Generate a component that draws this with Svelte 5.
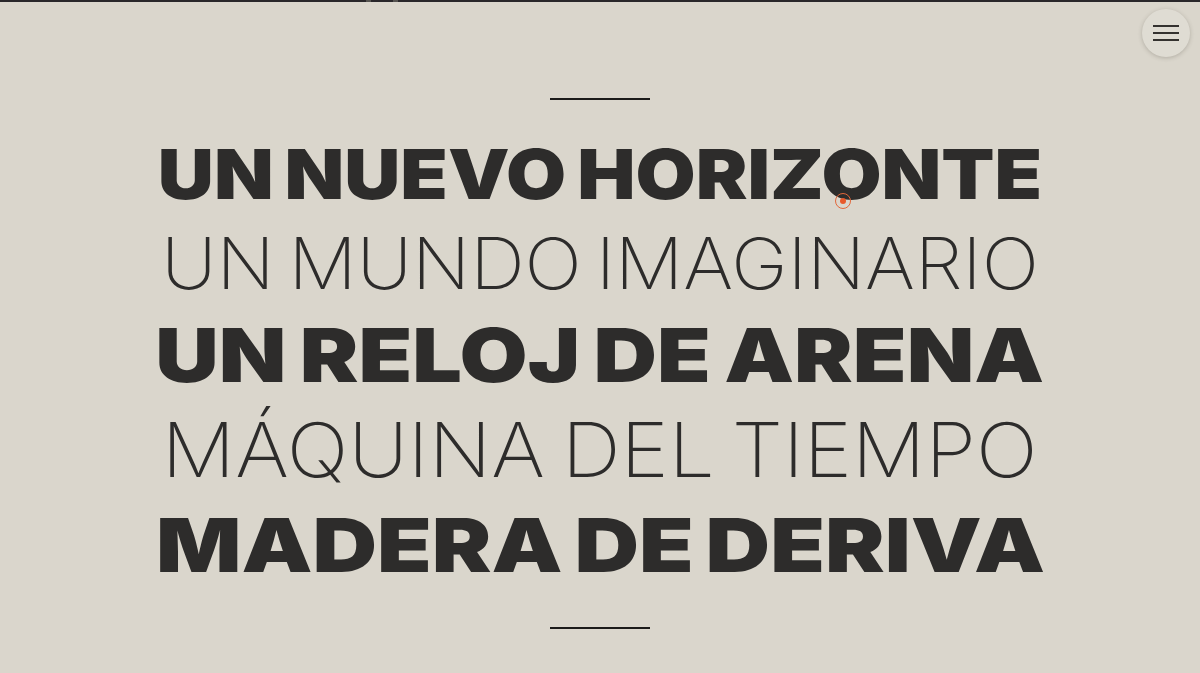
<script>
  // size and stretch per line, every line is fitted to the same width
  const lines = [
    { text: 'UN NUEVO HORIZONTE', bold: true, size: 69, sx: 1.125, ws: -4, h: 88 },
    { text: 'UN MUNDO IMAGINARIO', bold: false, size: 71, sx: 1.07, ws: -7, h: 90 },
    { text: 'UN RELOJ DE ARENA', bold: true, size: 74.5, sx: 1.18, ws: -3.5, h: 93.5 },
    { text: 'MÁQUINA DEL TIEMPO', bold: false, size: 75, sx: 1.09, ws: -5.5, h: 95 },
    { text: 'MADERA DE DERIVA', bold: true, size: 74.5, sx: 1.2, ws: -5, h: 96 }
  ];
</script>

<div class="topline"><span class="speck one"></span><span class="speck two"></span></div>

<main class="page">
  <div class="rule"></div>
  <div class="titles">
    {#each lines as line}
      <div class="line" class:bold={line.bold} class:thin={!line.bold} style="height: {line.h}px">
        <span style="font-size: {line.size}px; word-spacing: {line.ws}px; transform: scaleX({line.sx})">{line.text}</span>
      </div>
    {/each}
  </div>
  <div class="rule"></div>
</main>

<button class="menu" aria-label="menu">
  <i></i><i></i><i></i>
</button>

<div class="cursor"><b></b></div>

<style>
  :global(body) {
    margin: 0;
    background: #dad6cc;
    overflow: hidden;
  }
  .topline {
    height: 2px;
    background: #29272a;
    position: relative;
  }
  .speck {
    position: absolute;
    top: 0;
    width: 5px;
    height: 2px;
    background: #55534f;
  }
  .one {
    left: 366px;
  }
  .two {
    left: 393px;
  }
  .page {
    height: 671px;
    box-sizing: border-box;
    padding-top: 96px;
    display: flex;
    flex-direction: column;
    align-items: center;
    font-family: Inter, "Liberation Sans", sans-serif;
    color: #2d2c2b;
  }
  .rule {
    width: 100px;
    height: 2px;
    background: #1c1b1a;
    flex: none;
  }
  .titles {
    margin: 30.5px 0 34px;
    width: 100%;
  }
  .line {
    display: flex;
    justify-content: center;
    align-items: center;
    white-space: nowrap;
  }
  .line span {
    display: inline-block;
    line-height: 1;
  }
  .bold {
    font-weight: 900;
  }
  .thin {
    font-weight: 250;
  }
  .menu {
    position: absolute;
    top: 9px;
    right: 10px;
    width: 48px;
    height: 48px;
    padding: 0;
    border: 0;
    border-radius: 50%;
    background: #dfdcd3;
    box-shadow: 0 1px 4px rgba(60, 55, 45, 0.25);
    display: flex;
    flex-direction: column;
    align-items: center;
    justify-content: center;
    gap: 5.5px;
  }
  .menu i {
    display: block;
    width: 26px;
    height: 1.7px;
    background: #34322f;
  }
  .cursor {
    position: absolute;
    left: 835px;
    top: 193px;
    width: 14px;
    height: 14px;
    border: 1px solid #e2673a;
    border-radius: 50%;
    display: flex;
    align-items: center;
    justify-content: center;
  }
  .cursor b {
    width: 6px;
    height: 6px;
    border-radius: 50%;
    background: #e8592a;
  }
</style>
